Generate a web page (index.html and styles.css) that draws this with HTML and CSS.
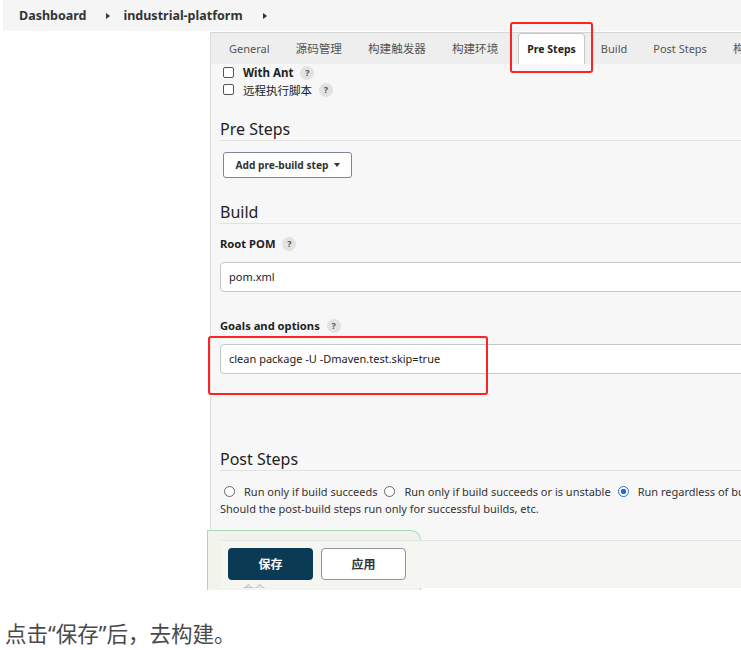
FILE: index.html
```html
<!DOCTYPE html>
<html lang="zh-CN">
<head>
    <meta charset="UTF-8">
    <title>industrial-platform Config</title>
    <link rel="stylesheet" href="styles.css">
</head>
<body>
    <div class="page">
        <nav class="crumbs">
            <span class="crumb">Dashboard</span>
            <span class="crumb-arrow"></span>
            <span class="crumb">industrial-platform</span>
            <span class="crumb-arrow"></span>
        </nav>

        <div class="shot">
            <div class="tabs">
                <span class="tab en">General</span>
                <span class="tab">源码管理</span>
                <span class="tab">构建触发器</span>
                <span class="tab">构建环境</span>
                <span class="tab en active">Pre Steps</span>
                <span class="tab en">Build</span>
                <span class="tab en">Post Steps</span>
                <span class="tab">构建设置</span>
            </div>

            <div class="content">
                <div class="check-row"><span class="box"></span><b>With Ant</b><span class="help">?</span></div>
                <div class="check-row"><span class="box"></span>远程执行脚本<span class="help">?</span></div>

                <h2 class="section first">Pre Steps</h2>
                <button class="btn-add">Add pre-build step <span class="caret"></span></button>

                <h2 class="section">Build</h2>
                <div class="label">Root POM<span class="help">?</span></div>
                <div class="input">pom.xml</div>

                <div class="label gap">Goals and options<span class="help">?</span></div>
                <div class="input">clean package -U -Dmaven.test.skip=true</div>

                <h2 class="section post">Post Steps</h2>
                <div class="radio-row">
                    <span class="radio"></span>Run only if build succeeds
                    <span class="radio"></span>Run only if build succeeds or is unstable
                    <span class="radio on"></span>Run regardless of build result
                </div>
                <div class="hint">Should the post-build steps run only for successful builds, etc.</div>
            </div>

            <div class="bottom-bar">
                <div class="actions">
                    <button class="btn-save">保存</button>
                    <button class="btn-apply">应用</button>
                </div>
                <div class="under">命令</div>
            </div>
        </div>

        <div class="mark mark-tab"></div>
        <div class="mark mark-goals"></div>
        <div class="save-glow"></div>

        <p class="note">点击“保存”后，去构建。</p>
    </div>
</body>
</html>
```

FILE: styles.css
```css
body { margin: 0; background: #fff; font-family: "Noto Sans", "Noto Sans CJK SC", sans-serif; color: #222; }
.page { position: relative; width: 741px; overflow: hidden; }

.crumbs { margin-left: 3px; height: 31px; background: #f5f5f5; display: flex; align-items: center; padding-left: 16px; font-size: 12.5px; font-weight: bold; color: #333; }
.crumb-arrow { width: 0; height: 0; border-left: 4px solid #333; border-top: 3px solid transparent; border-bottom: 3px solid transparent; margin: 0 13px 0 20px; }

.shot { margin: 1px 0 0 210px; height: 556px; background: #f7f7f7; border-left: 1px solid #dcdcdc; border-top: 1px solid #d6d6d6; overflow: hidden; box-sizing: border-box; }

.tabs { height: 31px; background: #eeeeee; display: flex; gap: 6px; padding-left: 8px; white-space: nowrap; }
.tab { padding: 0 10px; font-size: 11.6px; color: #555; line-height: 31px; }
.tab.en { font-size: 11px; }
.tab.active { background: #fff; border: 1px solid #c8c8c8; border-bottom: 0; border-radius: 4px 4px 0 0; font-size: 10.5px; font-weight: bold; color: #222; line-height: 30px; padding: 0 8px; margin-left: 4px; }

.content { width: 640px; padding-left: 9px; }
.check-row { display: flex; align-items: center; height: 17px; font-size: 11.5px; padding-left: 3px; }
.check-row b { font-weight: bold; }
.box { width: 9px; height: 9px; border: 1px solid #555; border-radius: 2px; background: #fff; margin-right: 9px; }
.help { display: inline-flex; align-items: center; justify-content: center; width: 14px; height: 14px; border-radius: 50%; background: #e2e2e2; color: #555; font-size: 9px; font-weight: bold; margin-left: 7px; }

.section { margin: 23px 0 0; font-size: 16px; font-weight: normal; line-height: 22px; color: #222; border-bottom: 1px solid #e2e2e2; }
.section.first { margin-top: 20px; }
.section.post { margin-top: 74px; }

.btn-add { display: flex; align-items: center; margin: 11px 0 0 3px; height: 26px; width: 129px; justify-content: center; background: #fff; border: 1px solid #7d8791; border-radius: 3px; font-family: inherit; font-size: 10.2px; font-weight: bold; color: #333; }
.caret { width: 0; height: 0; border-top: 4px solid #333; border-left: 3.5px solid transparent; border-right: 3.5px solid transparent; margin-left: 5px; }

.label { display: flex; align-items: center; height: 17px; margin-top: 11px; font-size: 11.2px; font-weight: bold; }
.label.gap { margin-top: 25px; }
.input { margin-top: 10px; height: 30px; box-sizing: border-box; background: #fff; border: 1px solid #c3c7cc; border-radius: 4px; padding-left: 8px; line-height: 28px; font-size: 11px; color: #222; }

.radio-row { display: flex; align-items: center; height: 17px; margin-top: 12px; font-size: 11px; white-space: nowrap; padding-left: 4px; color: #333; }
.radio { width: 9px; height: 9px; border: 1px solid #666; border-radius: 50%; margin: 0 9px 0 7px; background: #fff; }
.radio:first-child { margin-left: 0; }
.radio.on { border-color: #1a6fe0; background: radial-gradient(circle, #1a6fe0 2.5px, #fff 3px); }
.hint { font-size: 11px; line-height: 17px; color: #333; }

.bottom-bar { position: relative; z-index: 2; margin: 23px 0 0 10px; border-top: 1px solid #e3e3e3; background: #f5f5f2; height: 60px; }
.actions { display: flex; gap: 8px; padding: 7px 0 0 7px; }
.btn-save, .btn-apply { width: 85px; height: 32px; border-radius: 4px; font-family: inherit; font-size: 12px; font-weight: bold; }
.btn-save { background: #0b3a55; border: 0; color: #fff; }
.btn-apply { background: #fff; border: 1px solid #8a939b; color: #333; }
.under { font-size: 11px; color: #bbb; padding-left: 22px; margin-top: 1px; }

.mark { position: absolute; z-index: 3; border: 2px solid #f22; border-radius: 3px; box-sizing: border-box; }
.mark-tab { left: 510px; top: 22px; width: 83px; height: 51px; }
.mark-goals { left: 208px; top: 336px; width: 280px; height: 59px; }
.save-glow { position: absolute; z-index: 1; left: 207px; top: 530px; width: 214px; height: 60px; box-sizing: border-box; background: #f2f4ec; border: 1px solid #a9d8b8; border-bottom: 0; border-radius: 0 10px 0 0; }

.note { margin: 33px 0 0 5px; font-size: 21.5px; line-height: 26px; color: #4a4a4a; }
```
